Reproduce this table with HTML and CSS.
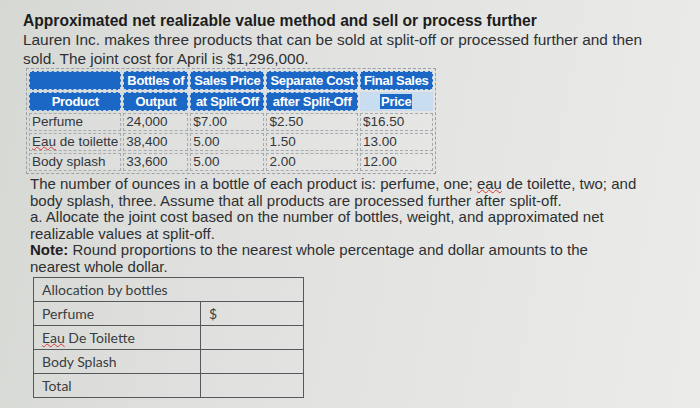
FILE: index.html
```html
<!DOCTYPE html>
<html>
<head>
<meta charset="utf-8">
<link rel="stylesheet" href="styles.css">
</head>
<body>
<div class="page">
  <h1 class="title">Approximated net realizable value method and sell or process further</h1>
  <p class="intro">Lauren Inc. makes three products that can be sold at split-off or processed further and then<br>sold. The joint cost for April is $1,296,000.</p>
  <table class="data">
    <tr class="h1">
      <th class="blank"></th>
      <th>Bottles of</th>
      <th>Sales Price</th>
      <th>Separate Cost</th>
      <th>Final Sales</th>
    </tr>
    <tr class="h2">
      <th>Product</th>
      <th>Output</th>
      <th>at Split-Off</th>
      <th>after Split-Off</th>
      <th class="sel"><span>Price</span></th>
    </tr>
    <tr>
      <td>Perfume</td><td>24,000</td><td>$7.00</td><td>$2.50</td><td>$16.50</td>
    </tr>
    <tr>
      <td><span class="sp">Eau</span> de toilette</td><td>38,400</td><td>5.00</td><td>1.50</td><td>13.00</td>
    </tr>
    <tr>
      <td>Body splash</td><td>33,600</td><td>5.00</td><td>2.00</td><td>12.00</td>
    </tr>
  </table>
  <p class="body">The number of ounces in a bottle of each product is: perfume, one; <span class="sp">eau</span> de toilette, two; and<br>body splash, three. Assume that all products are processed further after split-off.<br>a. Allocate the joint cost based on the number of bottles, weight, and approximated net<br>realizable values at split-off.<br><b>Note:</b> Round proportions to the nearest whole percentage and dollar amounts to the<br>nearest whole dollar.</p>
  <table class="alloc">
    <tr><td colspan="2">Allocation by bottles</td></tr>
    <tr><td class="lbl">Perfume</td><td>$</td></tr>
    <tr><td class="lbl"><span class="sp">Eau</span> De Toilette</td><td></td></tr>
    <tr><td class="lbl">Body Splash</td><td></td></tr>
    <tr><td class="lbl">Total</td><td></td></tr>
  </table>
</div>
</body>
</html>
```
FILE: styles.css
```css
html, body {
  margin: 0;
  padding: 0;
}
body {
  width: 700px;
  height: 408px;
  overflow: hidden;
  background: linear-gradient(100deg, #d6d8d4 0%, #dfe0dd 30%, #e6e7e4 70%, #ebecea 100%);
  font-family: "Liberation Sans", Arial, sans-serif;
  color: #2e3033;
}
.page {
  padding: 12px 0 0 23px;
}
.title {
  margin: 0;
  font-size: 15.6px;
  line-height: 18px;
  font-weight: bold;
  color: #1c1d20;
  white-space: nowrap;
}
.intro {
  margin: 0;
  font-size: 15.4px;
  line-height: 19px;
  white-space: nowrap;
}
.sp {
  text-decoration: underline wavy #d23a3a;
  text-decoration-thickness: 1px;
  text-underline-offset: 0;
  text-decoration-skip-ink: none;
}
.data {
  margin: 0 0 0 3px;
  border-collapse: separate;
  border-spacing: 2px;
  border: 1px dashed #9aa0a6;
  font-size: 13.5px;
}
.data th {
  background: #1b67c6;
  color: #fff;
  font-weight: bold;
  font-size: 13px;
  letter-spacing: -0.3px;
  padding: 0 3px;
  height: 17px;
  line-height: 15px;
  text-align: center;
  white-space: nowrap;
  border: 1px dashed #c9d8ea;
}
.data th.blank {
  width: 82px;
}
.data th.sel {
  background: #c9ddf0;
}
.data th.sel span {
  background: #1b67c6;
  padding: 0 1px;
}
.data td {
  border: 1px dashed #a6abb0;
  padding: 0 2px;
  height: 16px;
  line-height: 16px;
  text-align: left;
  white-space: nowrap;
  color: #34373b;
  background: rgba(255,255,255,0.08);
}
.body {
  margin: 2px 0 0 7px;
  font-size: 15px;
  line-height: 16.6px;
  white-space: nowrap;
}
.body b {
  color: #1f2023;
}
.alloc {
  margin: 1px 0 0 10px;
  border-collapse: collapse;
  width: 271px;
  font-family: Lato, "Liberation Sans", sans-serif;
  font-size: 14px;
  color: #3a3c40;
}
.alloc td {
  border: 1px solid #55585c;
  height: 23px;
  padding: 0 8px;
}
.alloc td.lbl {
  width: 150px;
}
```
